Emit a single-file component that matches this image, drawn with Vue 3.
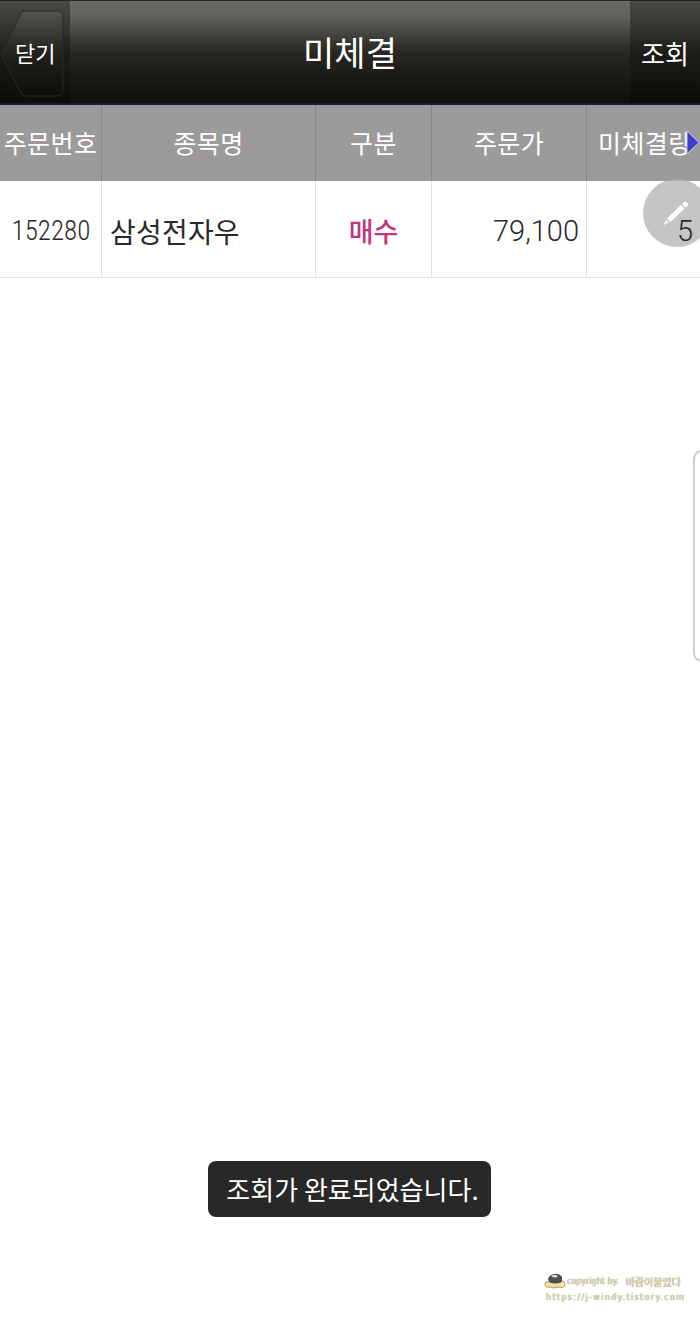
<template>
  <div class="screen">
    <header class="topbar">
      <div class="side-btn close-btn">
        <svg class="close-shape" width="70" height="103" viewBox="0 0 70 103">
          <path d="M22 11 H57 Q63 11 63 17 V90 Q63 96 57 96 H26 Q23 96 21 93 L1 54 L21 13 Q22 11 24 11 Z" fill="url(#closeFill)" stroke="#2a2926" stroke-width="1" />
          <defs>
            <linearGradient id="closeFill" x1="0" y1="0" x2="0" y2="1">
              <stop offset="0" stop-color="#55534f" />
              <stop offset="0.5" stop-color="#22211c" />
              <stop offset="1" stop-color="#0e0d09" />
            </linearGradient>
          </defs>
        </svg>
        <span class="close-label">닫기</span>
      </div>
      <h1 class="title">미체결</h1>
      <div class="side-btn search-btn">조회</div>
    </header>

    <div class="orders">
      <div class="row head">
        <div class="cell" v-for="col in columns" :key="col">{{ col }}</div>
        <svg class="more" width="15" height="27" viewBox="0 0 15 27">
          <path d="M2 2 L14 13.5 L2 25 Z" fill="#3d3fc8" stroke="#c9c9e0" stroke-width="1" stroke-linejoin="round" />
        </svg>
      </div>
      <div class="row body">
        <div class="cell code">152280</div>
        <div class="cell name">삼성전자우</div>
        <div class="cell type">매수</div>
        <div class="cell price">79,100</div>
        <div class="cell qty">5</div>
      </div>
    </div>

    <div class="pen">
      <svg width="68" height="68" viewBox="0 0 68 68">
        <path d="M20 46.5 L23 40.5 L26 43.5 Z" fill="#fff" opacity="0.75" />
        <path d="M24 39.5 L38 26 L41.5 29.5 L27.5 43 Z" fill="#fff" />
        <path d="M39 25 L41.5 23 Q42.5 22.2 43.8 23.4 L45 24.6 Q46 25.8 45 26.8 L42.5 28.5 Z" fill="#fff" />
      </svg>
    </div>
    <div class="edge-handle"></div>

    <div class="toast">조회가 완료되었습니다.</div>

    <div class="mark">
      <div class="mark-top">
        <svg width="22" height="18" viewBox="0 0 22 18">
          <path d="M1 12 Q1 9 4 10 L18 9 Q22 10 21 13 Q19 17 14 15 Q9 17 6 15 Q1 16 1 12 Z" fill="#efe3a6" stroke="#a88a4a" stroke-width="0.8" />
          <path d="M4 7 Q5 3 10 2 Q15 1 18 5 L18 10 Q11 13 5 10 Z" fill="#4f4f4b" />
          <path d="M7 4 Q11 2 14 4 Q11 7 7 4 Z" fill="#e8e8e8" />
        </svg>
        <span class="mark-en">copyright by.</span>
        <span class="mark-ko">바람이불었다</span>
      </div>
      <div class="mark-url">https://j-windy.tistory.com</div>
    </div>
  </div>
</template>

<script setup>
const columns = ['주문번호', '종목명', '구분', '주문가', '미체결량'];
</script>

<style>
html,
body {
  margin: 0;
  background: #fff;
}
</style>

<style scoped>
.screen {
  position: relative;
  width: 700px;
  height: 1317px;
  overflow: hidden;
  background: #fff;
  font-family: "Noto Sans CJK KR", "Noto Sans", sans-serif;
}

.topbar {
  display: flex;
  height: 102px;
  border-top: 1px solid #26251f;
  border-bottom: 2px solid #1c1a33;
  background: linear-gradient(#6c6b69 0, #5e5d5a 18%, #3a3934 38%, #272620 52%, #1c1b15 72%, #100f0a 100%);
}

.side-btn {
  width: 70px;
  flex: none;
  background: linear-gradient(#4a4948 0, #3b3a38 20%, #1e1d19 50%, #0c0b07 100%);
  color: #fff;
}

.close-btn {
  position: relative;
}

.close-shape {
  position: absolute;
  left: 0;
  top: -1px;
}

.close-label {
  position: absolute;
  left: 15px;
  top: 34px;
  font-size: 22px;
  line-height: 34px;
}

.title {
  flex: 1;
  margin: 0;
  text-align: center;
  color: #fff;
  font-size: 34px;
  font-weight: 400;
  line-height: 102px;
}

.search-btn {
  text-align: center;
  font-size: 26px;
  line-height: 103px;
}

.row {
  display: grid;
  grid-template-columns: 102px 214px 116px 155px 113px;
  position: relative;
}

.head {
  height: 76px;
  background: #9c9a9b;
  color: #fff;
  font-size: 25px;
  letter-spacing: 0.4px;
  line-height: 75px;
  text-align: center;
}

.head .cell {
  border-right: 1px solid #8a8889;
  white-space: nowrap;
  overflow: hidden;
}

.head .cell:nth-child(5) {
  border-right: none;
  text-align: left;
  margin-left: 11px;
}

.more {
  position: absolute;
  right: 0;
  top: 24px;
}

.body {
  z-index: 1;
  grid-template-rows: 96px;
  height: 96px;
  border-bottom: 1px solid #e0e0e0;
  color: #2a2a2a;
  font-size: 28px;
  line-height: 100px;
}

.body .cell {
  height: 96px;
  border-right: 1px solid #e0e0e0;
  white-space: nowrap;
}

.body .cell:last-child {
  border-right: none;
}

.code {
  font-family: Roboto, sans-serif;
  font-stretch: condensed;
  font-size: 27px;
  font-weight: 300;
  text-align: center;
  text-indent: 1px;
  line-height: 100px;
}

.name {
  padding-left: 8px;
  font-size: 28px;
  font-weight: 400;
  letter-spacing: 0.2px;
}

.type {
  text-align: center;
  color: #c4337d;
  font-weight: 500;
  font-size: 27px;
}

.price {
  text-align: right;
  padding-right: 7px;
  font-family: Roboto, sans-serif;
  font-size: 29px;
  font-weight: 300;
  line-height: 100px;
}

.qty {
  text-align: right;
  padding-right: 7px;
  font-family: Roboto, sans-serif;
  font-size: 29px;
  font-weight: 300;
  line-height: 100px;
}

.pen {
  position: absolute;
  z-index: 0;
  left: 643px;
  top: 179px;
  width: 68px;
  height: 68px;
  border-radius: 50%;
  background: rgba(178, 178, 178, 0.75);
}

.pen svg {
  display: block;
}

.edge-handle {
  position: absolute;
  left: 693px;
  top: 450px;
  width: 14px;
  height: 208px;
  border: 2px solid #cfcfcf;
  border-radius: 9px;
  background: #fff;
}

.toast {
  position: absolute;
  left: 208px;
  top: 1161px;
  width: 283px;
  height: 56px;
  box-sizing: border-box;
  padding-left: 6px;
  border-radius: 8px;
  background: #282828;
  color: #fff;
  font-size: 26px;
  font-weight: 400;
  line-height: 56px;
  text-align: center;
  white-space: nowrap;
}

.mark {
  position: absolute;
  left: 544px;
  top: 1270px;
  width: 150px;
  color: #e6e1b8;
  text-shadow: 0 0 1px #5e5b45;
  font-family: "DejaVu Sans", sans-serif;
}

.mark-top {
  display: flex;
  align-items: center;
  gap: 1px;
  height: 22px;
  white-space: nowrap;
}

.mark-en {
  font-size: 8px;
  margin-top: 1px;
}

.mark-ko {
  font-family: "Noto Sans CJK KR", sans-serif;
  font-size: 10px;
  margin-left: 6px;
}

.mark-url {
  font-size: 8px;
  letter-spacing: 1.35px;
  line-height: 12px;
  margin-left: 2px;
  white-space: nowrap;
}
</style>
